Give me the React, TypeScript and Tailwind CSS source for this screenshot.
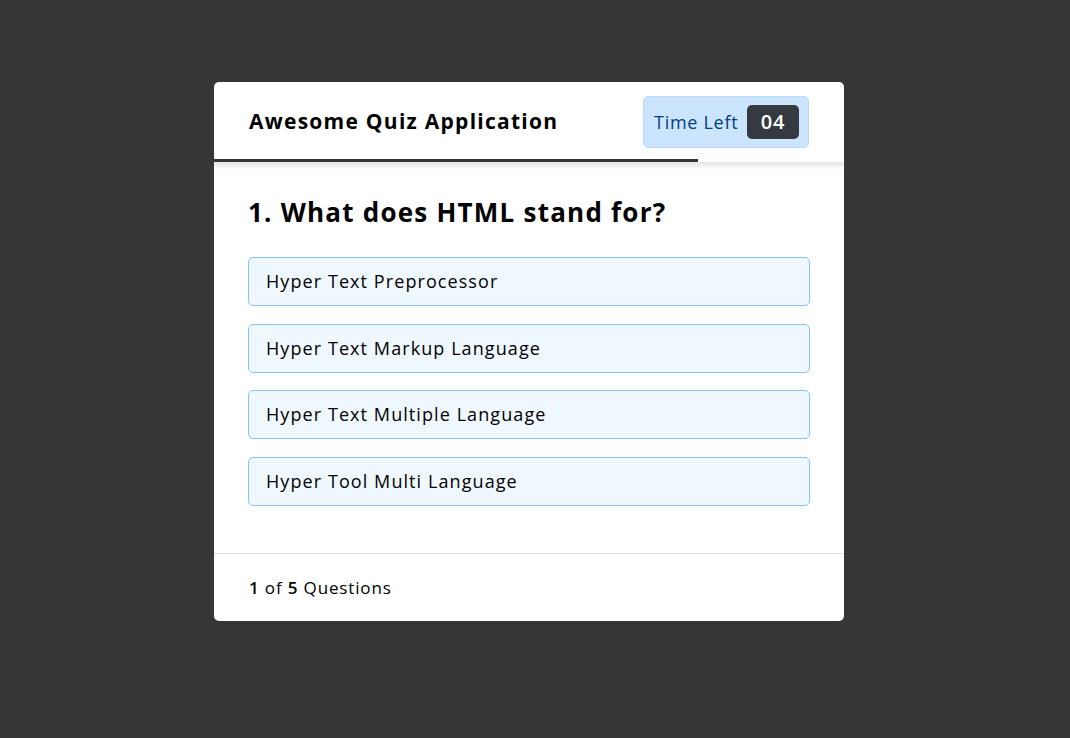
const options = [
  'Hyper Text Preprocessor',
  'Hyper Text Markup Language',
  'Hyper Text Multiple Language',
  'Hyper Tool Multi Language',
];

export default function App() {
  return (
    <div className="min-h-[738px] w-full bg-[#363636] pt-[82px] pl-[214px] font-['Open_Sans',sans-serif]">
      <div className="w-[630px] bg-white rounded-[5px] overflow-hidden">
        {/* Header */}
        <header className="relative z-10 h-[80px] px-[35px] flex items-center justify-between shadow-[0_3px_5px_1px_rgba(0,0,0,0.1)]">
          <div className="text-[21px] font-bold tracking-[0.06em] text-black">Awesome Quiz Application</div>
          <div className="h-[52px] w-[166px] flex items-center justify-between pl-[10px] pr-[9px] bg-[#cce5ff] border border-[#b8daff] rounded-[5px]">
            <span className="text-[18px] tracking-[0.04em] text-[#004085]">Time Left</span>
            <span className="h-[34px] w-[52px] flex items-center justify-center bg-[#343a40] rounded-[5px] text-white text-[20px] font-semibold tracking-[0.04em]">
              04
            </span>
          </div>
          <div className="absolute left-0 bottom-0 h-[3px] w-[484px] bg-[#363636]" />
        </header>

        {/* Question */}
        <section className="px-[34px] pt-[31px] pb-[47px]">
          <h2 className="text-[26px] leading-[38px] font-bold tracking-[0.047em] text-black">1. What does HTML stand for?</h2>
          <div className="mt-[26px] flex flex-col gap-[17.7px]">
            {options.map((o) => (
              <div
                key={o}
                className="h-[49px] flex items-center px-[17px] bg-[#f0f8ff] border border-[#84c5fe] rounded-[5px] text-[18px] tracking-[0.06em] text-black"
              >
                {o}
              </div>
            ))}
          </div>
        </section>

        {/* Footer */}
        <footer className="h-[68px] px-[35px] flex items-center border-t border-[#dcdcdc] text-[17px] tracking-[0.05em] text-black">
          <span>
            <span className="font-semibold">1</span> of <span className="font-semibold">5</span> Questions
          </span>
        </footer>
      </div>
    </div>
  );
}
